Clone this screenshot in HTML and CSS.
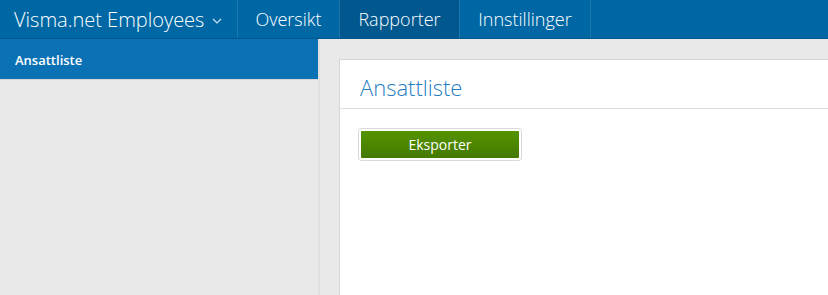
FILE: index.html
```html
<!DOCTYPE html>
<html lang="no">
<head>
    <meta charset="UTF-8">
    <title>Ansattliste</title>
    <link rel="stylesheet" href="styles.css">
</head>
<body>
    <nav class="topbar">
        <div class="brand">Visma.net Employees
            <svg class="caret" width="10" height="6" viewBox="0 0 10 6"><path d="M1 1l4 4 4-4" fill="none" stroke="#cfe3f2" stroke-width="1.2"/></svg>
        </div>
        <a class="nav-item overview">Oversikt</a>
        <a class="nav-item active">Rapporter</a>
        <a class="nav-item settings">Innstillinger</a>
    </nav>

    <div class="main">
        <aside class="sidebar">
            <a class="side-item active">Ansattliste</a>
        </aside>

        <section class="content">
            <div class="panel">
                <h1 class="panel-title">Ansattliste</h1>
                <div class="panel-body">
                    <button class="btn-export">Eksporter</button>
                </div>
            </div>
        </section>
    </div>
</body>
</html>
```

FILE: styles.css
```css
body {
    margin: 0;
    font-family: "Open Sans", Arial, sans-serif;
    background-color: #e9e9e9;
    height: 295px;
    overflow: hidden;
}

.topbar {
    display: flex;
    height: 38px;
    background-color: #0067a5;
    border-bottom: 1px solid #00578c;
}

.brand,
.nav-item {
    box-sizing: border-box;
    display: flex;
    align-items: center;
    color: #ffffff;
    font-weight: 300;
    border-right: 1px solid #1e76ad;
}

.brand {
    gap: 8px;
    width: 238px;
    padding-left: 14px;
    font-size: 20px;
}

.caret {
    margin-top: 3px;
}

.nav-item {
    justify-content: center;
    font-size: 18px;
}

.nav-item.overview {
    width: 102px;
}

.nav-item.active {
    width: 120px;
    background-color: #00588f;
}

.nav-item.settings {
    width: 131px;
}

.main {
    display: flex;
    height: 256px;
}

.sidebar {
    width: 318px;
    background-color: #e9e9e9;
    border-right: 2px solid #e0e0e0;
}

.side-item {
    display: block;
    height: 40px;
    line-height: 42px;
    padding-left: 15px;
    font-size: 13px;
    font-weight: 600;
    color: #ffffff;
    background-color: #0a71b5;
    border-bottom: 1px solid #d6d6d6;
}

.content {
    flex: 1;
    padding: 20px 0 0 19px;
}

.panel {
    height: 100%;
    background-color: #ffffff;
    border-top: 1px solid #d6d6d6;
    border-left: 1px solid #d6d6d6;
}

.panel-title {
    margin: 0;
    padding: 0 20px;
    height: 48px;
    line-height: 55px;
    font-size: 22px;
    font-weight: 300;
    color: #1f7cc1;
    border-bottom: 1px solid #dedede;
}

.panel-body {
    padding: 20px 19px;
}

.btn-export {
    width: 162px;
    height: 31px;
    padding: 0;
    font-family: "Open Sans", Arial, sans-serif;
    font-size: 14px;
    color: #ffffff;
    background: linear-gradient(#559300, #447900);
    border: 2px solid #ffffff;
    border-radius: 3px;
    box-shadow: 0 0 0 1px #d9d9d9;
    cursor: pointer;
}
```
